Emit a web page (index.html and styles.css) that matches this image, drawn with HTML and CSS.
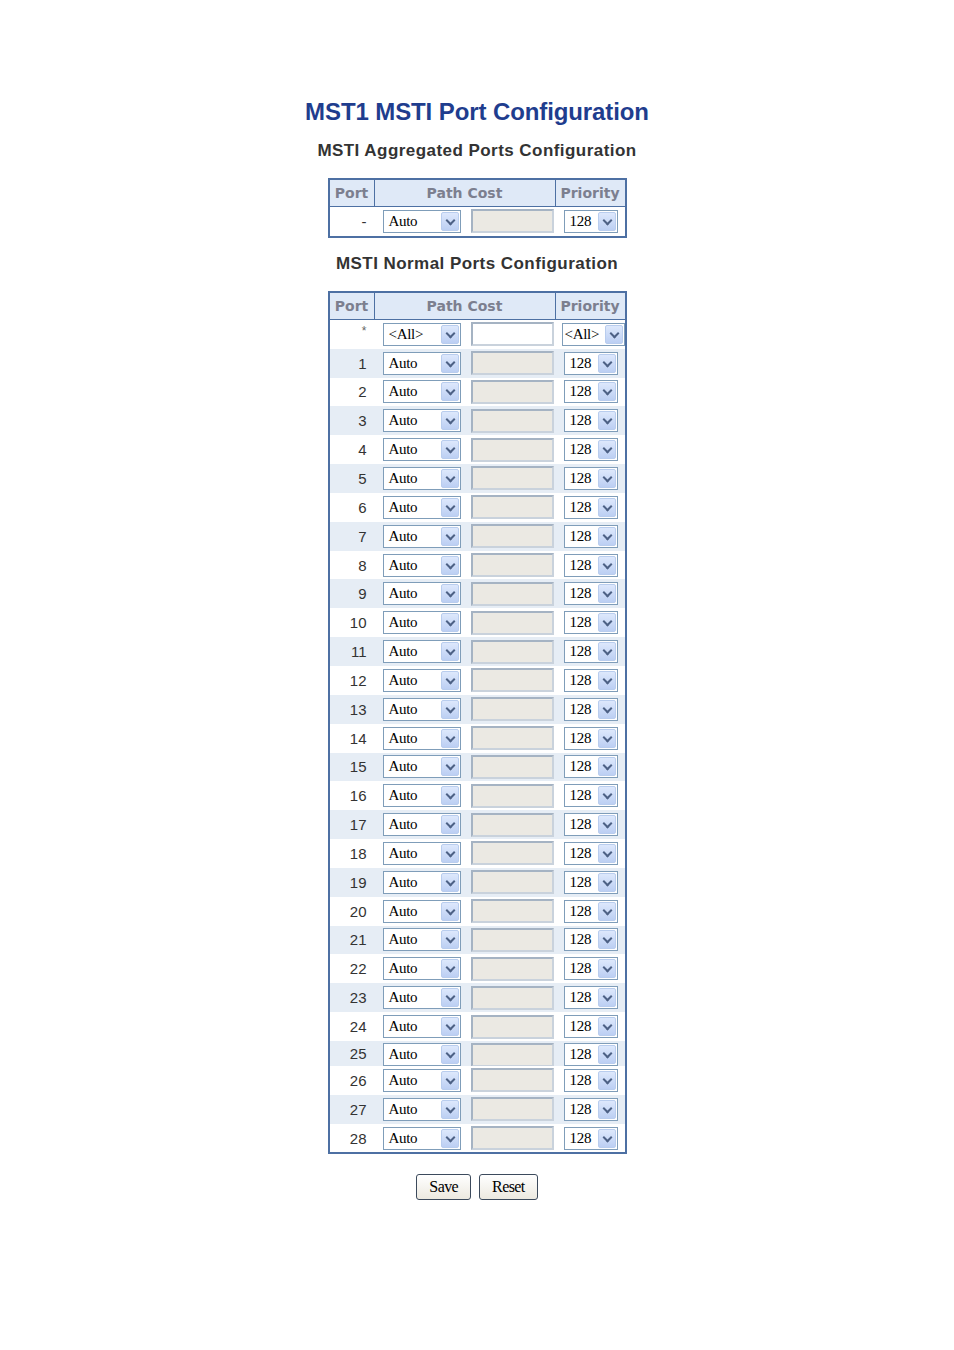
FILE: index.html
```html
<!DOCTYPE html>
<html lang="en">

<head>
    <meta charset="UTF-8">
    <title>MSTI Port Configuration</title>
    <link rel="stylesheet" href="styles.css">
</head>

<body>
    <div class="page">
        <h1>MST1 MSTI Port Configuration</h1>

        <h2>MSTI Aggregated Ports Configuration</h2>
        <div class="cfg">
            <div class="cfg-head">
                <div>Port</div>
                <div>Path Cost</div>
                <div>Priority</div>
            </div>
            <div class="cfg-row">
                <div class="port">-</div>
                <div class="cost"><div class="sel sel-cost"><span>Auto</span><i></i></div><div class="txt"></div></div>
                <div class="prio"><div class="sel sel-prio"><span>128</span><i></i></div></div>
            </div>
        </div>

        <h2>MSTI Normal Ports Configuration</h2>
        <div class="cfg" id="normal">
            <div class="cfg-head">
                <div>Port</div>
                <div>Path Cost</div>
                <div>Priority</div>
            </div>
            <div class="cfg-row">
                <div class="port star">*</div>
                <div class="cost"><div class="sel sel-cost"><span>&lt;All&gt;</span><i></i></div><div class="txt open"></div></div>
                <div class="prio wide"><div class="sel sel-all"><span>&lt;All&gt;</span><i></i></div></div>
            </div>
        </div>

        <div class="buttons">
            <button>Save</button>
            <button>Reset</button>
        </div>
    </div>

    <script>
        (function () {
            var table = document.getElementById('normal');
            for (var i = 1; i <= 28; i++) {
                var row = document.createElement('div');
                row.className = 'cfg-row' + (i % 2 ? ' odd' : '') + (i === 25 ? ' cut' : '');
                row.innerHTML =
                    '<div class="port">' + i + '</div>' +
                    '<div class="cost"><div class="sel sel-cost"><span>Auto</span><i></i></div><div class="txt"></div></div>' +
                    '<div class="prio"><div class="sel sel-prio"><span>128</span><i></i></div></div>';
                table.appendChild(row);
            }
        })();
    </script>
</body>

</html>
```

FILE: styles.css
```css
* {
    box-sizing: border-box;
    margin: 0;
    padding: 0;
}

body {
    background: #fff;
    font-family: "Liberation Sans", Arial, sans-serif;
    color: #333;
}

.page {
    padding-top: 97px;
    text-align: center;
}

h1 {
    font-size: 24px;
    line-height: 30px;
    font-weight: bold;
    color: #1f3d8e;
    letter-spacing: -0.1px;
}

h2 {
    font-size: 17px;
    line-height: 22px;
    font-weight: bold;
    color: #333;
    letter-spacing: 0.45px;
    margin: 13px 0 16px;
}

.cfg + h2 {
    margin-top: 15px;
}

.cfg {
    width: 299px;
    margin: 0 auto;
    border: 2px solid #4d70a3;
    text-align: left;
}

.cfg-head,
.cfg-row {
    display: grid;
    grid-template-columns: 44px 181px 70px;
}

.cfg-head {
    height: 27px;
    background: #dfe9f7;
    border-bottom: 1px solid #4d70a3;
    font-family: "DejaVu Sans", Verdana, sans-serif;
    font-size: 14px;
    font-weight: bold;
    color: #7c7f8f;
    line-height: 26px;
    text-align: center;
}

.cfg-head div + div {
    border-left: 1px solid #4d70a3;
}

.cfg-row {
    height: 28.85px;
    align-items: center;
    background: #fff;
}

.cfg-row.odd {
    background: #e6edf5;
}

.cfg-row.cut {
    height: 25px;
    overflow: hidden;
    align-items: start;
    padding-top: 2px;
}

.cfg-row.cut .port {
    padding-top: 2px;
}

.port {
    text-align: right;
    padding-right: 7px;
    font-size: 15px;
    color: #333;
}

.port.star {
    font-size: 12px;
    color: #666;
    padding-bottom: 6px;
}

.cost {
    display: flex;
    align-items: center;
    padding-left: 9px;
    gap: 10px;
}

.prio {
    padding-left: 9px;
}

.prio.wide {
    padding-left: 7px;
}

.sel {
    display: flex;
    align-items: center;
    justify-content: space-between;
    height: 23px;
    border: 1px solid #7f9db9;
    background: #fff;
    padding: 0 1px 0 5px;
    font-family: "Liberation Serif", "Times New Roman", serif;
    font-size: 15px;
    color: #000;
    letter-spacing: -0.3px;
}

.sel-cost {
    width: 78px;
}

.sel-prio {
    width: 54px;
}

.sel-all {
    width: 63px;
    padding-left: 2px;
}

.sel i {
    position: relative;
    width: 18px;
    height: 19px;
    border: 1px solid #b9cdee;
    border-radius: 2px;
    background: linear-gradient(#dde8fc, #bccff3);
}

.sel i:after {
    content: "";
    position: absolute;
    top: 4px;
    left: 5px;
    width: 5px;
    height: 5px;
    border-right: 2px solid #4d6185;
    border-bottom: 2px solid #4d6185;
    transform: rotate(45deg);
}

.txt {
    width: 83px;
    height: 24px;
    border: 2px solid #a5b3c3;
    border-right-color: #c9d2dc;
    border-bottom-color: #c9d2dc;
    background: #ebe9e3;
}

.txt.open {
    background: #fff;
}

.buttons {
    margin-top: 20px;
    display: flex;
    justify-content: center;
    gap: 8px;
}

.buttons button {
    height: 26px;
    padding: 0 12px;
    border: 1px solid #3c4a5c;
    border-radius: 3px;
    background: linear-gradient(#ffffff, #ece9e0);
    font-family: "Liberation Serif", "Times New Roman", serif;
    font-size: 16px;
    letter-spacing: -0.6px;
    color: #000;
}
```
